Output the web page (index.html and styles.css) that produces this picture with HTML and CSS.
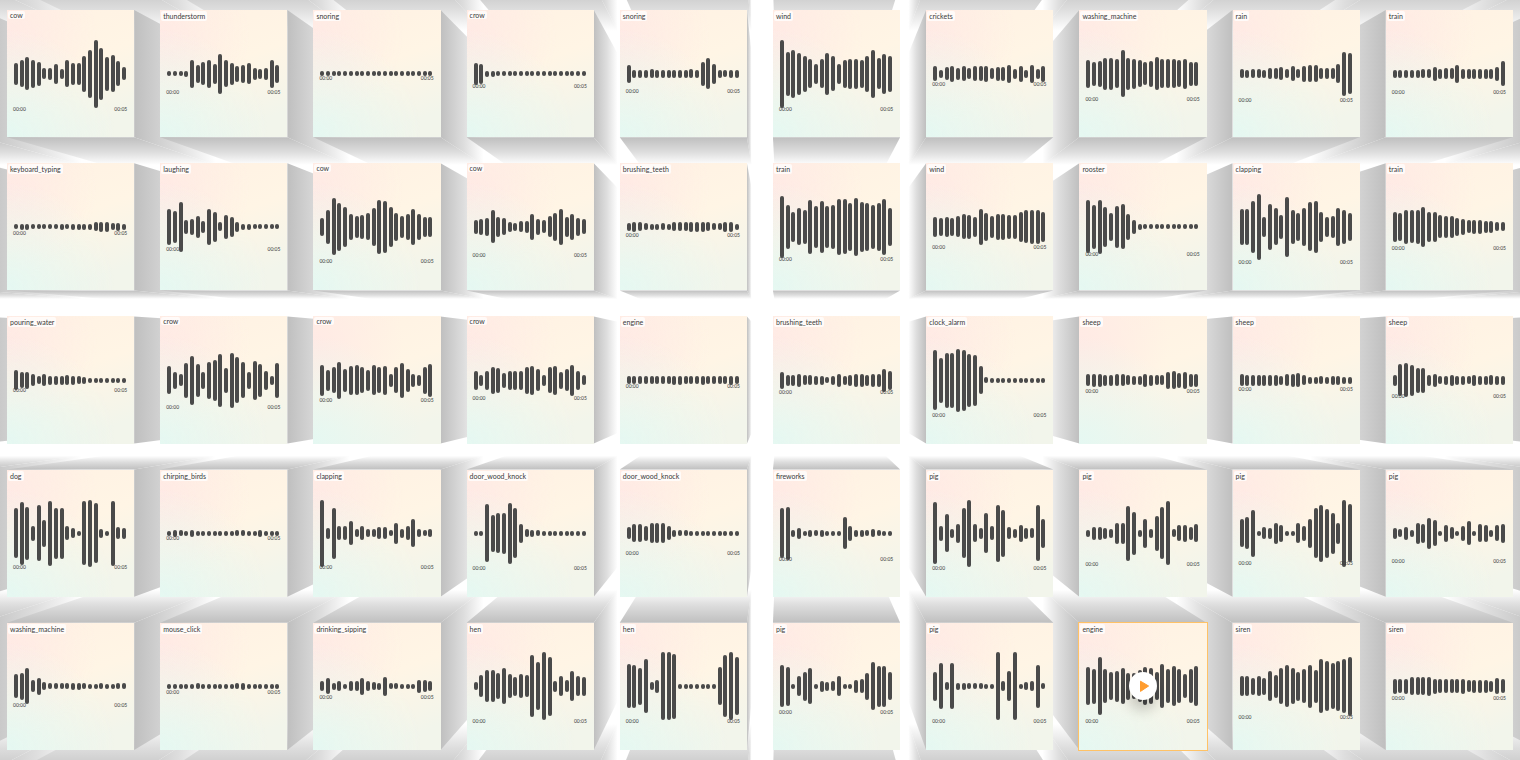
FILE: index.html
```html
<!DOCTYPE html>
<html lang="en">
<head>
<meta charset="utf-8">
<title>Sound wall</title>
<link rel="stylesheet" href="styles.css">
</head>
<body>
<main class="wall" id="wall">
  <svg class="depth" id="depth" aria-hidden="true"></svg>
  <div class="grid" id="grid"></div>
</main>
<script src="app.js"></script>
</body>
</html>
```
FILE: styles.css
```css
* {
  box-sizing: border-box;
}

body {
  margin: 0;
  background: #fff;
  color: #3a3a3a;
  font-family: Lato, "Open Sans", sans-serif;
}

.wall {
  position: relative;
  min-height: 100vh;
  overflow: hidden;
}

.depth {
  position: absolute;
  inset: 0;
  width: 100%;
  height: 100%;
}

.grid {
  position: relative;
  display: grid;
  grid-template-columns: repeat(10, minmax(0, 1fr));
  gap: 26px;
  padding: 10px 7px;
}

.card {
  position: relative;
  aspect-ratio: 1;
  display: flex;
  align-items: center;
  padding: 0 7px 0 6px;
  background:
    radial-gradient(circle at 0% 100%, #e5f8f2 0%, rgba(229, 248, 242, 0) 60%),
    radial-gradient(circle at 0% 20%, #ffeae5 0%, rgba(255, 234, 229, 0) 55%),
    linear-gradient(160deg, #fff1e3 0%, #fff5e5 45%, #f2f5eb 85%);
}

.card.active {
  outline: 1px solid #ffc266;
}

.tag {
  position: absolute;
  top: 1px;
  left: 1px;
  padding: 0 2px;
  border-radius: 2px;
  background: rgba(255, 255, 255, 0.75);
  font-size: 7px;
  line-height: 10px;
  white-space: nowrap;
}

.tag.short {
  line-height: 8px;
}

.wave {
  position: relative;
  width: 100%;
  display: flex;
  align-items: center;
}

.bars {
  width: 100%;
  display: flex;
  align-items: center;
  justify-content: space-between;
  padding: 0 1px;
}

.bar {
  width: 4px;
  border-radius: 2px;
  background: #4a4a4a;
}

.times {
  position: absolute;
  top: 100%;
  left: 0;
  right: 0;
  display: flex;
  justify-content: space-between;
  margin-top: -3px;
  font-size: 5px;
  line-height: 6px;
}

.play {
  position: absolute;
  top: 50%;
  left: 50%;
  width: 28px;
  height: 28px;
  margin: -14px;
  padding: 0;
  display: grid;
  place-items: center;
  border: 0;
  border-radius: 50%;
  background: #fff;
  box-shadow: 0 10px 14px rgba(0, 0, 0, 0.2);
}

.play svg {
  width: 28px;
  height: 28px;
}
```
FILE: app.js
```js
// name | distance of the time row below the centre line | bar heights
const clips = `
cow|35|22,27,33,28,24,11,12,20,10,27,22,22,36,48,68,52,34,37,25,13
thunderstorm|18|5,5,5,6,28,18,23,28,20,40,27,22,16,18,21,12,10,12,28,18
snoring|4|5,5,5,5,5,5,5,5,5,5,5,5,5,5,5,5,5,5,5,5
crow|12|22,20,6,6,5,5,5,5,5,5,5,5,5,5,5,5,5,5,5,5
snoring|17|18,8,8,8,9,8,8,8,8,8,8,9,8,24,31,20,8,7,8,8
wind|35|68,44,48,42,36,29,20,29,42,35,20,28,30,30,28,36,48,31,40,36
crickets|10|15,8,13,16,12,15,11,15,15,16,11,14,14,18,10,16,8,18,10,16
washing_machine|25|28,24,26,32,32,29,47,32,30,27,23,26,33,29,29,29,27,30,24,24
rain|26|9,8,9,9,8,11,11,13,9,15,9,16,17,17,11,11,11,19,44,41
train|18|8,8,8,8,8,9,9,14,10,11,11,18,10,10,10,10,10,10,14,25
keyboard_typing|6|5,6,6,5,5,5,5,5,6,5,6,6,6,6,9,10,10,7,8,6
laughing|22|36,32,50,14,16,22,12,36,30,9,24,20,10,6,6,5,5,5,5,5
cow|34|18,34,57,48,40,26,22,24,27,38,54,52,40,28,22,26,36,26,20,20
cow|28|14,16,18,33,20,17,10,8,11,12,26,16,13,21,28,36,20,26,18,15
brushing_teeth|8|8,10,9,7,6,6,7,6,9,9,9,10,10,10,9,7,7,10,10,6
train|32|62,44,30,37,34,54,42,52,42,44,56,55,48,58,50,48,44,48,56,38
wind|20|20,18,20,18,21,25,24,20,36,28,22,26,26,24,24,30,33,34,34,30
rooster|27|53,44,54,40,28,42,45,26,14,6,5,5,5,5,5,5,5,5,5,5
clapping|35|36,36,52,66,20,46,37,24,60,34,28,38,49,52,30,20,22,38,34,28
train|21|30,28,34,33,34,40,30,30,23,22,22,18,16,13,14,14,12,12,9,9
pouring_water|10|20,16,17,12,8,12,9,9,9,10,9,8,7,5,5,5,5,5,5,5
crow|27|28,17,12,35,49,33,17,37,41,53,25,55,46,36,17,39,33,19,9,35
crow|20|31,21,26,37,23,29,30,26,21,30,26,29,13,26,35,23,13,11,27,33
crow|18|19,11,19,27,25,15,19,19,19,27,29,22,11,26,29,17,22,31,19,10
engine|6|8,8,8,8,8,8,8,8,9,9,8,8,8,9,8,8,8,8,9,8
brushing_teeth|12|17,11,11,13,10,10,9,9,6,9,13,9,11,13,13,11,13,13,23,19
clock_alarm|35|60,45,55,55,63,61,53,51,28,6,5,5,5,5,5,5,5,5,5,5
sheep|11|12,13,13,11,11,12,12,10,9,9,13,11,10,10,17,18,15,17,13,13
sheep|9|12,11,11,11,11,11,11,9,12,13,14,10,7,7,8,7,9,9,7,7
sheep|16|11,32,34,31,25,25,11,13,8,9,11,9,9,8,11,9,9,10,9,9
dog|34|50,63,53,15,56,27,65,51,51,14,10,5,64,67,60,9,5,65,12,11
chirping_birds|5|5,7,6,5,7,5,5,5,5,5,5,5,6,6,5,5,7,5,5,5
clapping|34|67,11,51,14,14,24,8,14,8,8,12,12,6,21,9,14,28,8,6,8
door_wood_knock|35|5,5,58,37,40,41,61,50,19,8,7,6,5,5,5,5,5,5,5,5
door_wood_knock|20|12,18,18,15,20,20,20,14,7,6,6,5,5,5,5,5,5,5,5,5
fireworks|26|50,53,7,11,5,7,6,7,5,5,5,32,15,7,7,6,8,6,5,5
pig|35|62,15,38,9,19,50,67,18,11,40,14,57,47,12,9,17,11,10,56,29
pig|31|7,13,13,11,9,21,21,55,43,7,29,9,35,52,64,8,16,17,13,18
pig|30|28,32,47,5,12,11,21,17,5,5,20,15,29,50,57,49,41,21,67,58
pig|28|11,8,13,7,21,19,31,26,5,17,12,5,15,24,5,18,17,7,16,19
washing_machine|19|24,27,36,12,17,8,6,6,6,6,7,7,6,5,5,6,5,5,6,6
mouse_click|6|5,5,5,5,5,6,5,5,5,5,5,5,6,7,5,5,5,5,5,5
drinking_sipping|11|10,16,7,10,5,10,10,17,10,8,7,19,6,6,5,5,5,13,12,10
hen|35|8,22,32,32,26,36,24,19,24,22,62,48,68,59,11,20,12,30,20,19
hen|35|44,43,37,54,8,13,68,68,65,5,5,5,5,5,5,5,38,62,68,58
pig|26|42,39,5,20,29,36,5,11,9,10,20,5,5,13,14,27,48,41,41,28
pig|35|29,46,8,46,7,7,6,6,6,5,5,68,10,30,68,5,8,10,43,6
engine|35|38,35,58,34,28,31,36,27,26,32,38,36,28,44,34,40,34,24,34,40
siren|31|20,20,17,20,17,30,23,36,42,36,29,34,43,33,54,50,46,50,54,59
siren|12|15,14,15,18,18,18,19,15,14,14,14,14,15,12,13,13,13,11,16,14
`.trim().split("\n").map(line => {
  const [name, drop, bars] = line.split("|");
  return { name, drop: Number(drop), bars: bars.split(",").map(Number) };
});

const COLUMNS = 10;
const ACTIVE = 47;
const wall = document.getElementById("wall");
const grid = document.getElementById("grid");
const depth = document.getElementById("depth");

const playButton = `<button class="play" type="button" aria-label="Play">
  <svg viewBox="0 0 28 28" aria-hidden="true"><path d="M11.5 9.2 19.6 14 11.5 19.4Z" fill="#ff9c2e" stroke="#ff9c2e" stroke-width="1" stroke-linejoin="round"/></svg>
</button>`;

grid.innerHTML = clips.map((clip, i) => `
  <article class="card${i === ACTIVE ? " active" : ""}">
    <span class="tag${/^(cow|crow)$/.test(clip.name) ? " short" : ""}">${clip.name}</span>
    <div class="wave" style="height:${clip.drop * 2}px">
      <div class="times"><span>00:00</span><span>00:05</span></div>
      <div class="bars">${clip.bars.map(h => `<i class="bar" style="height:${h}px"></i>`).join("")}</div>
    </div>
    ${i === ACTIVE ? playButton : ""}
  </article>`).join("");

// Each card is the front of a box whose sides recede to one vanishing point.
function drawDepth() {
  const RECEDE = 0.125;
  const width = wall.clientWidth;
  const height = wall.clientHeight;
  const vx = width * 0.516;
  const vy = height * 0.472;
  const origin = wall.getBoundingClientRect();
  const cards = [...grid.children].map(c => c.getBoundingClientRect());
  const stepX = cards[1].left - cards[0].left;
  const stepY = cards[COLUMNS].top - cards[0].top;
  const rows = cards.length / COLUMNS;
  const boxes = [];

  for (let r = -1; r <= rows; r++) {
    for (let c = -1; c <= COLUMNS; c++) {
      const l = cards[0].left - origin.left + c * stepX;
      const t = cards[0].top - origin.top + r * stepY;
      const w = cards[0].width;
      const h = cards[0].height;
      const far = Math.abs(l + w / 2 - vx) + Math.abs(t + h / 2 - vy);
      boxes.push({ l, t, r: l + w, b: t + h, far });
    }
  }
  boxes.sort((a, b) => b.far - a.far);

  const bx = x => x + (vx - x) * RECEDE;
  const by = y => y + (vy - y) * RECEDE;
  let defs = "";
  let shapes = "";
  let id = 0;

  function face(points, x1, y1, x2, y2) {
    id++;
    defs += `<linearGradient id="f${id}" gradientUnits="userSpaceOnUse" x1="${x1}" y1="${y1}" x2="${x2}" y2="${y2}"><stop offset="0" stop-color="#bfbfbf"/><stop offset="0.55" stop-color="#dedede"/><stop offset="1" stop-color="#fff"/></linearGradient>`;
    shapes += `<polygon points="${points.join(" ")}" fill="url(#f${id})"/>`;
  }

  for (const { l, t, r, b } of boxes) {
    const near = r < vx ? r : l > vx ? l : null;
    if (near !== null) {
      face([near, t, bx(near), by(t), bx(near), by(b), near, b], near, 0, bx(near), 0);
    }
    const level = b < vy ? b : t > vy ? t : null;
    if (level !== null) {
      face([l, level, bx(l), by(level), bx(r), by(level), r, level], 0, level, 0, by(level));
    }
  }
  depth.setAttribute("viewBox", `0 0 ${width} ${height}`);
  depth.innerHTML = `<defs>${defs}</defs>${shapes}`;
}

drawDepth();
window.addEventListener("resize", drawDepth);
```
